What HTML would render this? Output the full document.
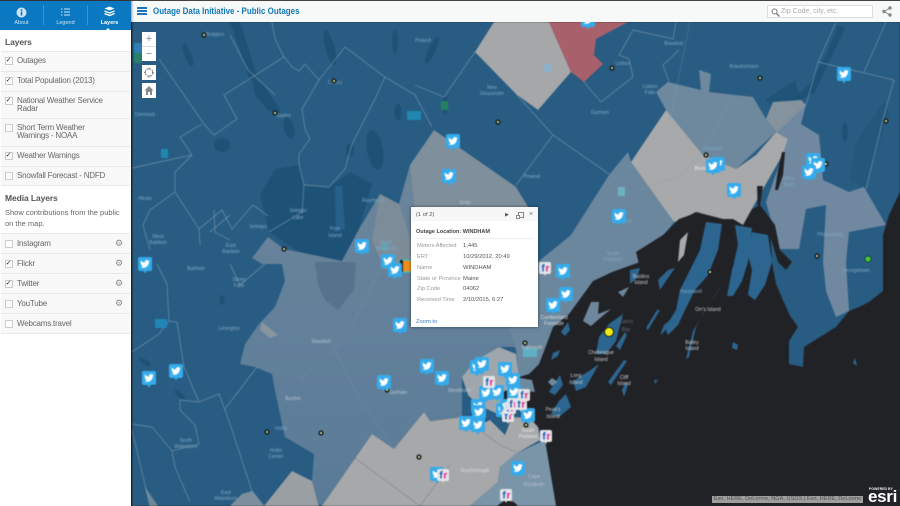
<!DOCTYPE html>
<html><head><meta charset="utf-8"><title>Outage Data Initiative</title>
<style>
html,body{margin:0;padding:0;width:900px;height:506px;overflow:hidden;background:#212226;font-family:"Liberation Sans",sans-serif}
#map{position:absolute;left:0;top:0;width:900px;height:506px;filter:blur(.4px)}
#hdr{position:absolute;left:131px;top:0;width:769px;height:22px;background:#f7f8f8;border-top:1px solid #444;box-sizing:border-box}
#ttl{position:absolute;left:22px;top:5px;font-size:9px;font-weight:bold;color:#1478b8;white-space:nowrap;transform:scaleX(.885);transform-origin:0 0}
.bg{position:absolute;left:6px;width:10px;height:1.6px;background:#1a76b8}
#srch{position:absolute;left:636px;top:4px;width:106px;height:13px;background:#fff;border:1px solid #ddd;box-sizing:border-box;font-size:7px;color:#aaa;padding:2px 0 0 13px}
#side{position:absolute;left:0;top:0;width:131px;height:506px;background:#fff;box-shadow:1px 0 2px rgba(0,0,0,.4);color:#666;font-size:8px}
#tabs{position:absolute;left:0;top:0;width:131px;height:30px;background:#0a79c2;border-top:1px solid #333;box-sizing:border-box;color:#cfe4f3;font-size:5.5px;text-align:center}
.tb{position:absolute;top:4px;width:43px;height:25px}
.tb span{position:absolute;left:0;right:0;top:15px}
.sep{position:absolute;top:4px;width:1px;height:20px;background:#3d94cf}
.row{position:absolute;left:1px;width:129px;background:#f8f8f8;border-top:1px solid #e8e8e8;box-sizing:border-box}
.cb{position:absolute;left:3.5px;top:5px;width:8px;height:8px;background:#fff;border:1px solid #ccc;box-sizing:border-box;font-size:7px;line-height:6px;color:#222;text-align:center}
.lb{position:absolute;left:16px;top:5px;line-height:8px;white-space:nowrap;letter-spacing:-.2px}
.gear{position:absolute;left:114px;top:5px;font-family:"DejaVu Sans",sans-serif;font-size:9px;line-height:10px;color:#888}
.m .cb{top:6px}.m .lb{top:6px}
h3{position:absolute;left:5px;margin:0;font-size:8.5px;font-weight:bold;color:#555;letter-spacing:-.1px}
#pop{position:absolute;left:411px;top:207px;width:127px;height:120px;background:#fff;box-shadow:0 0 3px rgba(0,0,0,.5);font-size:5.8px;color:#555}
#pop div{position:absolute;white-space:nowrap}
.k{left:6px;color:#999;letter-spacing:-.05px}.v{left:52px;color:#555}
#attr{position:absolute;left:712px;top:496px;width:151px;height:7px;background:rgba(190,190,190,.8);font-size:5.6px;line-height:7px;color:#555;white-space:nowrap;text-align:center;overflow:hidden}
#esri{position:absolute;left:868px;top:490px;font-size:17px;font-weight:bold;color:#fff;letter-spacing:-.3px;line-height:13px}
#pw{position:absolute;left:869px;top:487px;font-size:3.5px;font-weight:bold;color:#eee;white-space:nowrap}
.zb{position:absolute;left:142px;width:14px;background:#fff;color:#888;text-align:center;font-size:11px;line-height:14px}
</style></head><body>
<svg id="map" viewBox="0 0 900 506" width="900" height="506" xmlns="http://www.w3.org/2000/svg">
<defs>
<linearGradient id="gg" x1="0" y1="0" x2="0" y2="1"><stop offset="0" stop-color="#6c859a"/><stop offset=".5" stop-color="#62809a"/><stop offset="1" stop-color="#5a7b98"/></linearGradient>
<g id="t"><path d="M-2 6.5L0 9.5L2 6.5Z" fill="#2fa8ea"/><rect x="-7" y="-7" width="14" height="14" rx="2" fill="#35abec"/><path transform="translate(-4.8,-4.8) scale(.4)" fill="#fff" d="M23.95 4.57a10 10 0 0 1-2.82.77 4.96 4.96 0 0 0 2.16-2.72c-.95.55-2 .96-3.12 1.19a4.92 4.92 0 0 0-8.38 4.48C7.69 8.1 4.07 6.13 1.64 3.16a4.82 4.82 0 0 0-.66 2.47c0 1.71.87 3.21 2.19 4.1a4.9 4.9 0 0 1-2.23-.62v.06a4.92 4.92 0 0 0 3.95 4.83 5 5 0 0 1-2.21.08 4.94 4.94 0 0 0 4.6 3.42A9.87 9.87 0 0 1 0 19.54a14 14 0 0 0 7.56 2.21c9.05 0 14-7.5 14-13.98 0-.21 0-.42-.02-.63a9.94 9.94 0 0 0 2.46-2.57z"/></g>
<g id="d"><circle r="2.6" fill="#15191c"/><circle r="1.1" fill="#d8e6a8"/></g>
</defs>
<rect width="900" height="506" fill="#212226"/>
<!-- land -->
<path fill="#285c82" d="M132 22H900V192L889 215L883 235L883 291L869 302L859 307L849 311L836 327L804 347L803 367L789 364L789 341L798 327L789 314L776 284L772 262L770 225L760 205L733 219L696 212L680 220L660 240L640 262L612 272L593 281L569 314L553 327L544 351L539 364L529 374L519 377L516 385L512 395L520 410L530 418L538 427L545 440L549 464L556 506H132Z"/>
<!-- fingers -->
<g fill="#2c6690">
<path d="M706 222L722 224L718 250L708 275L695 290L685 310L678 325L668 335L665 328L676 310L680 290L690 270L700 250Z"/>
<path d="M723 284L703 314L696 327L689 357L686 359L693 331L699 321L716 294Z"/>
<path d="M735 225L752 228L748 262L742 281L733 296L727 296L732 270L738 245Z"/>
<path d="M752 232L768 235L772 262L765 285L755 300L748 295L752 270L748 255Z"/>
<path d="M623 314L616 341L606 354L596 354L599 337L609 324Z"/>
<path d="M599 364L586 387L576 391L573 381L589 371Z"/>
<path d="M566 394L571 407L559 417L551 414L559 401Z"/>
<path d="M556 381L560 375L563 385L555 395L549 392Z"/>
<path d="M627 335L620 350L616 346L625 332Z"/>
<path d="M628 385L624 397L622 390L626 382Z"/>
<path d="M627 361L611 385L608 382L624 360Z"/>
<path d="M660 310L648 330L646 328L657 310Z"/>
<path d="M675 268L668 278L660 290L658 280L668 270Z"/>
<path d="M630 270L640 268L637 278L630 284Z"/>
<path d="M733 342L738 345L737 350L732 348Z"/><path d="M855 358L857 366L853 363Z"/><path d="M658 380L655 384L654 380Z"/>
<path d="M670 320L664 332L660 335L664 325Z"/>
<path d="M568 322L570 330L565 336L561 332Z"/>
<path d="M560 350L558 356L551 360L553 353Z"/>
<path d="M520 378L532 380L535 392L520 390Z" fill="#6c8aa0"/>
</g>
<g fill="#6e879c">
<path d="M583 321L591 302L599 302L598 314L611 309L599 319L591 326Z"/>
<path d="M618 292L629 287L623 297Z"/>
<path d="M525 351L537 350L534 362L522 366L518 358Z"/>
<path d="M552 378L558 382L552 386L548 382Z"/>
</g>
<!-- dark bands & lakes -->
<g fill="#1d5276">
<path d="M275 169L260 195L269 232L299 252L342 261L359 229L372 184L350 172L329 187L304 185L299 165Z"/>
<path d="M838 25L826 55L809 85L789 102L800 100L815 92L830 60L845 28Z"/>
<path d="M765 100L795 80L800 98L775 108Z" opacity=".8"/>
<path d="M855 145L868 125L885 100L889 115L875 155L866 188L850 180Z" opacity=".45"/>
<path d="M230 22L240 22L252 60L258 80L250 80L240 50Z"/>
<path d="M252 79L262 82L279 108L280 115L268 110L255 95Z"/>
<ellipse cx="188" cy="55" rx="3.5" ry="12" transform="rotate(-20 188 55)"/>
<ellipse cx="330" cy="48" rx="4.5" ry="18" transform="rotate(-15 330 48)"/>
<ellipse cx="289" cy="128" rx="5" ry="11" transform="rotate(-15 289 128)"/>
<ellipse cx="395" cy="42" rx="3" ry="12"/>
<ellipse cx="432" cy="50" rx="3.5" ry="15" transform="rotate(25 432 50)"/>
<ellipse cx="375" cy="150" rx="8" ry="20" transform="rotate(-10 375 150)"/>
<ellipse cx="398" cy="112" rx="3.5" ry="8"/>
<ellipse cx="350" cy="150" rx="4" ry="6"/>
<ellipse cx="222" cy="145" rx="8" ry="7"/>
<ellipse cx="445" cy="105" rx="3" ry="9"/>
<ellipse cx="845" cy="132" rx="3" ry="10"/>
<ellipse cx="222" cy="300" rx="2.5" ry="5"/><ellipse cx="145" cy="362" rx="7" ry="2.5" transform="rotate(35 145 362)"/><ellipse cx="180" cy="395" rx="7" ry="2.5" transform="rotate(40 180 395)"/>
</g>
<path fill="#27608a" d="M335 186L342 186L345 229L336 232Z"/>
<!-- gray New Gloucester -->
<path fill="#a5a7a9" d="M475 52L494 22H549L571 72L538 110L516 94Z"/>
<path fill="#a8606a" d="M549 22H628L596 39L594 55L603 64L584 82L571 72Z"/>
<!-- Gray town -->
<path fill="#7f8f9c" d="M434 130L516 187L530 210V300H411L410 165Z"/>
<!-- Windham / Gorham -->
<path fill="url(#gg)" d="M268 237L284 249L299 252L342 261L359 229L380 194L399 204L410 165L415 210L430 270L500 300L516 347L499 347L475 361L462 377L462 417L430 421L424 412L394 449L372 434L322 506L319 504L312 481L314 454L285 437L275 391L272 374L255 367L240 364L245 344L259 324L275 307L285 281L282 264L262 264L252 258Z"/>
<path fill="#55738c" d="M315 262L356 262L354 290L338 310L325 300L318 285Z"/>
<path fill="#7d8c99" d="M380 194L399 204L411 240V262L385 270L372 240Z"/>
<path fill="#88959f" d="M262 322L278 335L270 338L260 330Z"/>
<!-- Freeport -->
<path fill="#6b879e" d="M631 162L674 222L660 240L640 262L612 272L593 281L569 314L553 327L544 351L539 364L529 374L519 377L516 350L500 300L538 262L571 235L609 175L628 152Z"/>
<!-- Topsham -->
<path fill="#6e899e" d="M656 92L668 82L701 90L699 70L711 74L709 92L753 97L766 119L776 132L736 169L703 155L666 110Z"/>
<!-- Brunswick -->
<path fill="#a7a9aa" d="M666 110L631 162L674 222L680 220L696 212L723 219L733 219L743 225L763 189L783 154L788 139L776 132L756 155L736 169L703 155Z"/>
<!-- West Bath -->
<path fill="#7089a0" d="M766 119L773 102L783 109L801 100L806 105L801 124L819 135L821 155L823 180L849 192L864 187L886 225L849 232L846 262L849 311L836 317L826 291L823 262L826 205L806 209L799 249L779 249L766 202L783 154L788 139L776 132Z"/>
<path fill="#85939e" d="M773 102L801 100L806 105L798 112L785 125L777 132L766 119Z"/>
<!-- Westbrook -->
<path fill="#a0a7ac" d="M462 377L475 361L499 347L516 354L519 377L516 385L512 395L500 415L478 405L468 395Z"/>
<!-- Scarborough / S Portland -->
<path fill="#a6a8aa" d="M424 412L430 421L462 417L480 425L490 420L505 435L512 417L530 418L538 427L540 440L517 453L500 467L498 482L470 506H322L372 434L394 449Z"/>
<path fill="#7a94a8" d="M500 467L517 453L545 440L549 464L556 506H470L498 482Z"/>
<path fill="#9a9fa3" d="M292 471L264 506H319L312 481Z"/><path fill="#7d8f9d" d="M242 494L230 506H264L252 491Z"/><path fill="#6f8799" d="M145 487L158 506H150Z"/>
<!-- water details -->
<g fill="#212226">
<path d="M503 392L512 388L517 398L512 405L504 402Z"/>
<path d="M497 506L505 500L514 502L518 506Z"/>
<path d="M636 252L663 235L679 219L699 212L689 229L676 255L673 264L650 272L640 268Z"/>
<path d="M724 219L733 219L734 264L727 280L724 262Z"/>
<path d="M757 186L763 186L760 205L775 225L780 250L792 262L786 270L778 262L770 235L758 215Z"/>
<path d="M782 152L785 152L783 175L778 190L775 190L778 170Z"/>
</g>
<path fill="#a7a9aa" d="M680 240L688 232L684 255L678 262Z"/>
<!-- borders -->
<g fill="none" stroke="#86a0b5" stroke-opacity=".6" stroke-width=".9">
<path d="M159 59L204 124L214 135L237 119L224 95L284 57L292 67L299 71L305 64L319 80L302 109L305 129L310 139L299 154L299 165L304 185L302 212L269 232"/>
<path d="M345 47L319 80M345 47L385 77L415 95L432 127M385 77L375 99L352 144L345 169L329 187L304 185"/>
<path d="M475 52L444 97L415 85M272 22L275 39L284 57M230 35L248 70L275 95"/>
<path d="M132 168L192 155L180 137L202 124M192 155L175 172L175 192L199 229L222 210L232 229L253 205L268 216M199 229L200 245M175 192L150 210L143 225L150 250"/>
<path d="M157 264L167 284L169 321L177 322L184 367L199 402L219 394L229 421L252 491L264 506M132 352L159 334L169 321M199 402L180 400L180 410L195 425L199 444L172 451L175 467L190 502M225 409L257 367M132 424L152 427L172 451M132 430L150 506M214 210L215 232L230 240M210 232L230 215M265 264L240 285L230 264"/>
<path d="M676 22L673 39L633 30L619 55L629 59L633 77L601 102L584 82M679 50L663 65L669 82M818 62L894 80L883 119L866 189M864 72L886 22M818 62L836 22M818 62L806 105M553 135L609 174M553 135L516 185M516 94L553 135"/>
<path d="M733 97L700 155L680 175L640 190M690 22L670 120M460 140L452 190L455 210" stroke-opacity=".3"/>
<path d="M300 380L345 340L380 270M330 340L360 400L395 449" stroke-opacity=".2"/>
<path d="M355 458L420 506M420 506L450 465M430 421L462 417L500 445L516 452" stroke="#777" stroke-opacity=".5"/>
</g>
<!-- tiles -->
<rect x="134" y="43" width="8" height="10" fill="#2f7fb5"/><rect x="134" y="53" width="8" height="10" fill="#2a8068"/>
<rect x="407" y="111" width="14" height="9" fill="#1f87b0"/>
<rect x="161" y="149" width="7" height="9" fill="#1f87b0"/>
<rect x="441" y="101" width="7" height="9" fill="#258062"/>
<rect x="544" y="64" width="7" height="8" fill="#8ab2cc"/>
<rect x="618" y="187" width="7" height="9" fill="#6db0c0"/>
<rect x="155" y="319" width="12" height="9" fill="#2285b8"/>
<rect x="523" y="348" width="14" height="9" fill="#5fb0c2"/>
<rect x="382" y="243" width="6" height="8" fill="#56a8b8" opacity=".8"/>
<!-- map labels -->
<g font-family="Liberation Sans,sans-serif" font-size="5" fill="#7ea6c4" text-anchor="middle">
<text x="215" y="36">Bridgton</text><text x="145" y="116">Denmark</text><text x="283" y="117">Naples</text><text x="335" y="84">Casco</text><text x="492" y="89">New</text><text x="492" y="95">Gloucester</text><text x="423" y="42">Poland</text><text x="145" y="200">Hiram</text><text x="158" y="238">West</text><text x="158" y="244">Baldwin</text><text x="231" y="247">East</text><text x="231" y="253">Baldwin</text><text x="258" y="228">Sebago</text><text x="196" y="270">Baldwin</text><text x="239" y="281">Steep</text><text x="239" y="287">Falls</text><text x="229" y="330">Limington</text><text x="298" y="212">Sebago</text><text x="298" y="219">Lake</text><text x="335" y="230">Frye</text><text x="335" y="237">Island</text><text x="373" y="202">Raymond</text><text x="386" y="244">North</text><text x="386" y="250">Windham</text><text x="465" y="204" fill="#b8c4cc">Gray</text><text x="321" y="343" fill="#b4c4d0">Standish</text><text x="293" y="400" fill="#b4c4d0">Buxton</text><text x="281" y="430">Hollis</text><text x="276" y="452">Hollis</text><text x="276" y="458">Center</text><text x="186" y="442">North</text><text x="186" y="448">Waterboro</text><text x="226" y="494">East</text><text x="226" y="500">Waterboro</text><text x="398" y="394" fill="#b4c4d0">Gorham</text><text x="460" y="392" fill="#b4c4d0">Westbrook</text><text x="475" y="472" fill="#ddd">Scarborough</text><text x="534" y="478" fill="#b4c4d0">Cape</text><text x="534" y="486" fill="#b4c4d0">Elizabeth</text><text x="528" y="432" fill="#e8e8e8">South</text><text x="528" y="438" fill="#e8e8e8">Portland</text><text x="554" y="319" fill="#ddd">Cumberland</text><text x="554" y="325" fill="#ddd">Foreside</text><text x="532" y="349" fill="#ccc">Falmouth</text><text x="601" y="354" fill="#ccc">Chebeague</text><text x="601" y="361" fill="#ccc">Island</text><text x="576" y="377" fill="#ccc">Long</text><text x="576" y="384" fill="#ccc">Island</text><text x="553" y="411" fill="#ccc">Peak's</text><text x="553" y="418" fill="#ccc">Island</text><text x="626" y="323" fill="#5f6d77">Casco</text><text x="626" y="331" fill="#5f6d77">Bay</text><text x="641" y="278" fill="#ccc">Bustins</text><text x="641" y="284" fill="#ccc">Island</text><text x="708" y="311" fill="#ccc">Orr's Island</text><text x="692" y="344" fill="#ccc">Bailey</text><text x="692" y="350" fill="#ccc">Island</text><text x="624" y="379" fill="#ccc">Cliff</text><text x="624" y="385" fill="#ccc">Island</text><text x="691" y="293">Harpswell</text><text x="856" y="272">Georgetown</text><text x="830" y="236">Phippsburg</text><text x="789" y="180">West</text><text x="789" y="186">Bath</text><text x="713" y="150">Topsham</text><text x="706" y="170" fill="#eee">Brunswick</text><text x="622" y="223">Freeport</text><text x="613" y="255">South</text><text x="613" y="261">Freeport</text><text x="600" y="114">Durham</text><text x="623" y="65">Lisbon</text><text x="650" y="88">Lisbon</text><text x="650" y="94">Falls</text><text x="674" y="45">Bowdoin</text><text x="744" y="68">Bowdoinham</text><text x="532" y="178">Pownal</text>
</g>
<!-- city dots -->
<use href="#d" x="204" y="35"/><use href="#d" x="275" y="113"/><use href="#d" x="334" y="81"/><use href="#d" x="498" y="122"/><use href="#d" x="284" y="249"/><use href="#d" x="612" y="68"/><use href="#d" x="706" y="155"/><use href="#d" x="760" y="78"/><use href="#d" x="826" y="164"/><use href="#d" x="886" y="121"/><use href="#d" x="817" y="256"/><use href="#d" x="153" y="383"/><use href="#d" x="267" y="432"/><use href="#d" x="321" y="433"/><use href="#d" x="387" y="390"/><use href="#d" x="419" y="457"/><use href="#d" x="525" y="343"/><use href="#d" x="526" y="425"/><use href="#d" x="710" y="272"/>
<circle cx="868" cy="259" r="3" fill="#3ecb3a" stroke="#1b3322" stroke-width=".7"/>
<circle cx="609" cy="332" r="4.6" fill="#eeea10" stroke="#111" stroke-width=".9"/>
<!-- orange marker -->
<rect x="400" y="260" width="12" height="12" fill="#f08c1c" stroke="#18d0e8" stroke-width="1"/><rect x="400" y="260" width="3" height="12" fill="#222"/>
<!-- twitter -->
<use href="#t" x="588" y="20"/><use href="#t" x="844" y="74"/><use href="#t" x="453" y="141"/><use href="#t" x="449" y="176"/><use href="#t" x="619" y="216"/><use href="#t" x="734" y="190"/><use href="#t" x="718" y="164"/><use href="#t" x="713" y="166"/><use href="#t" x="813" y="160"/><use href="#t" x="818" y="165"/><use href="#t" x="809" y="172"/><use href="#t" x="362" y="246"/><use href="#t" x="388" y="261"/><use href="#t" x="395" y="270"/><use href="#t" x="145" y="264"/><use href="#t" x="400" y="325"/><use href="#t" x="427" y="366"/><use href="#t" x="442" y="378"/><use href="#t" x="384" y="382"/><use href="#t" x="176" y="371"/><use href="#t" x="149" y="378"/><use href="#t" x="477" y="367"/><use href="#t" x="482" y="364"/><use href="#t" x="505" y="369"/><use href="#t" x="513" y="380"/><use href="#t" x="486" y="393"/><use href="#t" x="497" y="392"/><use href="#t" x="514" y="392"/><use href="#t" x="478" y="406"/><use href="#t" x="479" y="412"/><use href="#t" x="466" y="423"/><use href="#t" x="478" y="425"/><use href="#t" x="503" y="410"/><use href="#t" x="507" y="406"/><use href="#t" x="528" y="415"/><use href="#t" x="518" y="468"/><use href="#t" x="437" y="474"/><use href="#t" x="563" y="271"/><use href="#t" x="566" y="294"/><use href="#t" x="553" y="305"/>
<!-- flickr -->
<g font-family="Liberation Sans,sans-serif" font-size="10" font-weight="bold" text-anchor="middle">
<g transform="translate(545,268)"><path d="M-1.5 5L0 8L1.5 5Z" fill="#ddd"/><rect x="-6" y="-6" width="12" height="12" rx="2" fill="#e3e4e6"/><text x="-2" y="3.5" fill="#1a5cb8">f</text><text x="2.5" y="3.5" fill="#e8208c">r</text></g>
<g transform="translate(489,382)"><path d="M-1.5 5L0 8L1.5 5Z" fill="#ddd"/><rect x="-6" y="-6" width="12" height="12" rx="2" fill="#e3e4e6"/><text x="-2" y="3.5" fill="#1a5cb8">f</text><text x="2.5" y="3.5" fill="#e8208c">r</text></g>
<g transform="translate(508,416)"><path d="M-1.5 5L0 8L1.5 5Z" fill="#ddd"/><rect x="-6" y="-6" width="12" height="12" rx="2" fill="#e3e4e6"/><text x="-2" y="3.5" fill="#1a5cb8">f</text><text x="2.5" y="3.5" fill="#e8208c">r</text></g>
<g transform="translate(510,408)"><path d="M-1.5 5L0 8L1.5 5Z" fill="#ddd"/><rect x="-6" y="-6" width="12" height="12" rx="2" fill="#e3e4e6"/><text x="-2" y="3.5" fill="#1a5cb8">f</text><text x="2.5" y="3.5" fill="#e8208c">r</text></g>
<g transform="translate(513,404)"><path d="M-1.5 5L0 8L1.5 5Z" fill="#ddd"/><rect x="-6" y="-6" width="12" height="12" rx="2" fill="#e3e4e6"/><text x="-2" y="3.5" fill="#1a5cb8">f</text><text x="2.5" y="3.5" fill="#e8208c">r</text></g>
<g transform="translate(521,404)"><path d="M-1.5 5L0 8L1.5 5Z" fill="#ddd"/><rect x="-6" y="-6" width="12" height="12" rx="2" fill="#e3e4e6"/><text x="-2" y="3.5" fill="#1a5cb8">f</text><text x="2.5" y="3.5" fill="#e8208c">r</text></g>
<g transform="translate(524,395)"><path d="M-1.5 5L0 8L1.5 5Z" fill="#ddd"/><rect x="-6" y="-6" width="12" height="12" rx="2" fill="#e3e4e6"/><text x="-2" y="3.5" fill="#1a5cb8">f</text><text x="2.5" y="3.5" fill="#e8208c">r</text></g>
<g transform="translate(546,436)"><path d="M-1.5 5L0 8L1.5 5Z" fill="#ddd"/><rect x="-6" y="-6" width="12" height="12" rx="2" fill="#e3e4e6"/><text x="-2" y="3.5" fill="#1a5cb8">f</text><text x="2.5" y="3.5" fill="#e8208c">r</text></g>
<g transform="translate(443,475)"><path d="M-1.5 5L0 8L1.5 5Z" fill="#ddd"/><rect x="-6" y="-6" width="12" height="12" rx="2" fill="#e3e4e6"/><text x="-2" y="3.5" fill="#1a5cb8">f</text><text x="2.5" y="3.5" fill="#e8208c">r</text></g>
<g transform="translate(506,495)"><path d="M-1.5 5L0 8L1.5 5Z" fill="#ddd"/><rect x="-6" y="-6" width="12" height="12" rx="2" fill="#e3e4e6"/><text x="-2" y="3.5" fill="#1a5cb8">f</text><text x="2.5" y="3.5" fill="#e8208c">r</text></g>
</g>
</svg>

<!-- zoom controls -->
<div class="zb" style="top:32px;height:14px;border-bottom:1px solid #ddd">+</div>
<div class="zb" style="top:47px;height:14px">&#8722;</div>
<div class="zb" style="top:65px;height:15px"><svg width="14" height="15" viewBox="0 0 14 15"><circle cx="7" cy="7.5" r="3.8" fill="none" stroke="#888" stroke-width="1.2" stroke-dasharray="2 1"/><path d="M7 2.5v2M7 10.5v2M2 7.5h2M10 7.5h2" stroke="#888"/></svg></div>
<div class="zb" style="top:83px;height:15px"><svg width="14" height="15" viewBox="0 0 14 15"><path d="M7 3L2.5 7.5H4V12H6V9H8V12H10V7.5H11.5Z" fill="#888"/></svg></div>

<!-- header -->
<div id="hdr">
<div class="bg" style="top:6px"></div><div class="bg" style="top:9px"></div><div class="bg" style="top:12px"></div>
<div id="ttl">Outage Data Initiative - Public Outages</div>
<div id="srch">Zip Code, city, etc.<svg style="position:absolute;left:3px;top:2px" width="9" height="9" viewBox="0 0 9 9"><circle cx="3.5" cy="3.5" r="2.5" fill="none" stroke="#777"/><path d="M5.5 5.5L8.5 8.5" stroke="#777" stroke-width="1.3"/></svg></div>
<svg style="position:absolute;left:751px;top:5px" width="10" height="11" viewBox="0 0 10 11"><circle cx="8" cy="2" r="1.7" fill="#888"/><circle cx="2" cy="5.5" r="1.7" fill="#888"/><circle cx="8" cy="9" r="1.7" fill="#888"/><path d="M8 2L2 5.5L8 9" stroke="#888" fill="none"/></svg>
</div>

<!-- sidebar -->
<div id="side">
<div id="tabs">
<div class="tb" style="left:0"><svg style="position:absolute;left:16px;top:2px" width="11" height="11"><circle cx="5.5" cy="5.5" r="5" fill="#cfe4f3"/><rect x="4.7" y="4.5" width="1.6" height="4" fill="#0a79c2"/><rect x="4.7" y="2.3" width="1.6" height="1.5" fill="#0a79c2"/></svg><span>About</span></div>
<div class="sep" style="left:43px"></div>
<div class="tb" style="left:44px"><svg style="position:absolute;left:17px;top:3px" width="9" height="8"><path d="M0 1h1.5M0 4h1.5M0 7h1.5M3 1h6M3 4h6M3 7h6" stroke="#cfe4f3" stroke-width="1"/></svg><span>Legend</span></div>
<div class="sep" style="left:87px"></div>
<div class="tb" style="left:88px;color:#fff;font-weight:bold"><svg style="position:absolute;left:16px;top:1px" width="11" height="11" viewBox="0 0 11 11"><path d="M5.5 .5L10.5 2.5L5.5 4.5L.5 2.5Z" fill="#fff"/><path d="M.5 5L5.5 7L10.5 5M.5 7.5L5.5 9.5L10.5 7.5" fill="none" stroke="#fff" stroke-width="1.3"/></svg><span>Layers</span></div>
<div style="position:absolute;left:105px;top:27px;border:3px solid transparent;border-bottom-color:#fff;border-top:0"></div>
</div>
<h3 style="top:37px">Layers</h3>
<div class="row" style="top:51px;height:20px"><div class="cb">&#10003;</div><div class="lb">Outages</div></div>
<div class="row" style="top:71px;height:20px"><div class="cb">&#10003;</div><div class="lb">Total Population (2013)</div></div>
<div class="row" style="top:91px;height:27px"><div class="cb">&#10003;</div><div class="lb">National Weather Service<br>Radar</div></div>
<div class="row" style="top:118px;height:28px"><div class="cb"></div><div class="lb">Short Term Weather<br>Warnings - NOAA</div></div>
<div class="row" style="top:146px;height:20px"><div class="cb">&#10003;</div><div class="lb">Weather Warnings</div></div>
<div class="row" style="top:166px;height:20px;border-bottom:1px solid #e8e8e8"><div class="cb"></div><div class="lb">Snowfall Forecast - NDFD</div></div>
<h3 style="top:193px">Media Layers</h3>
<div style="position:absolute;left:5px;top:207px;line-height:11px;font-size:7.5px;color:#666">Show contributions from the public<br>on the map.</div>
<div class="row m" style="top:233px;height:20px"><div class="cb"></div><div class="lb">Instagram</div><div class="gear">&#9881;</div></div>
<div class="row m" style="top:253px;height:20px"><div class="cb">&#10003;</div><div class="lb">Flickr</div><div class="gear">&#9881;</div></div>
<div class="row m" style="top:273px;height:20px"><div class="cb">&#10003;</div><div class="lb">Twitter</div><div class="gear">&#9881;</div></div>
<div class="row m" style="top:293px;height:20px"><div class="cb"></div><div class="lb">YouTube</div><div class="gear">&#9881;</div></div>
<div class="row m" style="top:313px;height:21px;border-bottom:1px solid #e8e8e8"><div class="cb"></div><div class="lb">Webcams.travel</div></div>
</div>

<!-- popup -->
<div id="pop">
<div style="left:0;top:0;width:127px;height:14px;background:#f7f7f7"></div>
<div style="left:5px;top:5px">(1 of 2)</div>
<div style="left:94px;top:5px;font-size:5px">&#9654;</div>
<svg style="position:absolute;left:105px;top:5px" width="8" height="8"><rect x="2.5" y=".5" width="5" height="5" fill="none" stroke="#888"/><rect x=".5" y="3.5" width="3" height="3" fill="#fff" stroke="#888"/></svg>
<div style="left:118px;top:4px;font-size:7px;color:#777">&#215;</div>
<div style="left:5px;top:22px;font-weight:bold;color:#444;font-size:5.5px">Outage Location: WINDHAM</div>
<div style="left:5px;top:31px;width:117px;height:1px;background:#eee"></div>
<div class="k" style="top:36px">Meters Affected</div><div class="v" style="top:36px">1,445</div>
<div class="k" style="top:47px">ERT</div><div class="v" style="top:47px">10/29/2012, 20:49</div>
<div class="k" style="top:58px">Name</div><div class="v" style="top:58px">WINDHAM</div>
<div class="k" style="top:69px">State or Province</div><div class="v" style="top:69px">Maine</div>
<div class="k" style="top:79px">Zip Code</div><div class="v" style="top:79px">04062</div>
<div class="k" style="top:90px">Received Time</div><div class="v" style="top:90px">2/10/2015, 6:27</div>
<div style="left:5px;top:112px;color:#3a7fbd">Zoom to</div>
</div>

<div id="attr">Esri, HERE, DeLorme, NGA, USGS | Esri, HERE, DeLorme</div>
<div id="pw">POWERED BY</div>
<div id="esri">esri</div>
</body></html>
